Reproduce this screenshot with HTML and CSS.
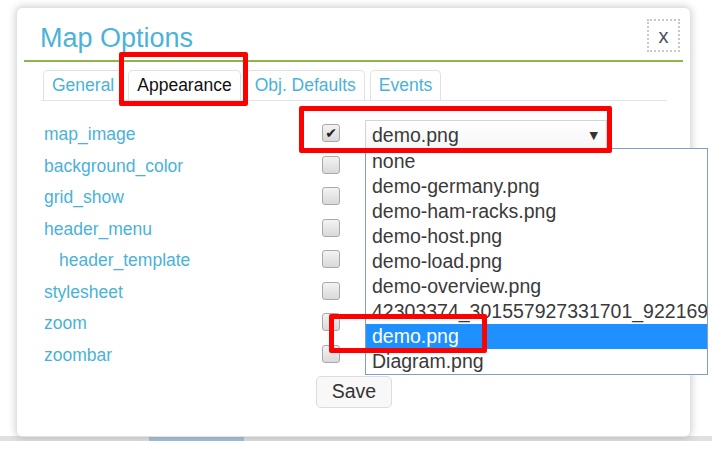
FILE: index.html
```html
<!DOCTYPE html>
<html>
<head>
<meta charset="utf-8">
<link rel="stylesheet" href="styles.css">
</head>
<body>
<div class="page">
  <div class="dialog">
    <div class="dlg-head">
      <h1 class="title">Map Options</h1>
      <button class="close">x</button>
    </div>
    <div class="tabs">
      <span class="tab">General</span>
      <span class="tab active">Appearance</span>
      <span class="tab">Obj. Defaults</span>
      <span class="tab">Events</span>
    </div>
    <div class="props">
      <span class="label">map_image</span>
      <span class="check checked">&#10004;</span>
      <div class="select-wrap">
        <div class="select"><span>demo.png</span><span class="arrow">&#9660;</span></div>
        <ul class="listbox">
          <li>none</li>
          <li>demo-germany.png</li>
          <li>demo-ham-racks.png</li>
          <li>demo-host.png</li>
          <li>demo-load.png</li>
          <li>demo-overview.png</li>
          <li>42303374_301557927331701_922169</li>
          <li class="sel">demo.png</li>
          <li>Diagram.png</li>
        </ul>
      </div>
      <span class="label">background_color</span><span class="check"></span><span></span>
      <span class="label">grid_show</span><span class="check"></span><span></span>
      <span class="label">header_menu</span><span class="check"></span><span></span>
      <span class="label sub">header_template</span><span class="check"></span><span></span>
      <span class="label">stylesheet</span><span class="check"></span><span></span>
      <span class="label">zoom</span><span class="check"></span><span></span>
      <span class="label">zoombar</span><span class="check"></span><span></span>
    </div>
    <div class="actions"><button class="save">Save</button></div>
  </div>
  <div class="mark mark-tab"></div>
  <div class="mark mark-select"></div>
  <div class="mark mark-item"></div>
</div>
<div class="hscroll"><div class="thumb"></div></div>
</body>
</html>
```
FILE: styles.css
```css
* { box-sizing: border-box; }
html, body { margin: 0; padding: 0; background: #fff; }
body { font-family: "Liberation Sans", Arial, sans-serif; }

.page { position: relative; padding: 7px 0 0 16px; height: 437px; }

.dialog {
  width: 675px;
  height: 430px;
  border: 1px solid #e2e2e2;
  border-radius: 6px;
  background: #fff;
  box-shadow: 0 0 9px rgba(0,0,0,0.22);
  display: flex;
  flex-direction: column;
}

.dlg-head {
  height: 54px;
  margin: 0 7px;
  border-bottom: 2px solid #8db54c;
  display: flex;
  justify-content: space-between;
  align-items: flex-start;
}
.title {
  margin: 15px 0 0 16px;
  font-size: 27px;
  line-height: 31px;
  font-weight: normal;
  color: #4db2d8;
}
.close {
  margin: 11px 3px 0 0;
  width: 33px;
  height: 33px;
  padding: 0;
  border: 2px dotted #c8c8c8;
  background: #fff;
  font-family: "Liberation Sans", Arial, sans-serif;
  font-size: 20px;
  line-height: 24px;
  color: #4a4f63;
}

.tabs {
  margin: 8px 23px 0 24px;
  padding-left: 2px;
  height: 31px;
  display: flex;
  gap: 5px;
  border-bottom: 1px solid #e4e4e4;
}
.tab {
  height: 30px;
  padding: 0 8px;
  border: 1px solid #e1e1e1;
  border-bottom: 0;
  border-radius: 5px 5px 0 0;
  font-size: 17.5px;
  line-height: 29px;
  color: #4ab2d9;
}
.tab.active { color: #111; }

.props {
  margin-top: 16.5px;
  padding-left: 27px;
  display: grid;
  grid-template-columns: 278px 43px 1fr;
  grid-auto-rows: 31.5px;
  align-items: center;
}
.label { font-size: 17.5px; line-height: 22px; padding-top: 2px; color: #4ab2d9; }
.label.sub { padding-left: 15px; }

.check {
  width: 18px;
  height: 18px;
  border: 1px solid #a9a9a9;
  border-radius: 3px;
  background: linear-gradient(#f3f3f3, #d9d9d9);
  font-family: "DejaVu Sans", sans-serif;
  font-size: 14px;
  line-height: 16px;
  text-align: center;
  color: #1d1d1d;
}

.select-wrap { position: relative; width: 242px; margin-top: 1px; }
.select {
  height: 28px;
  border: 1px solid #d4d4d4;
  border-bottom: 0;
  background: linear-gradient(#fff, #f6f6f6);
  display: flex;
  justify-content: space-between;
  align-items: center;
  padding: 2px 8px 0 6px;
  font-size: 19.5px;
  color: #3a3a3a;
}
.arrow { font-family: "DejaVu Sans", sans-serif; font-size: 11px; color: #333; }

.listbox {
  position: absolute;
  left: 0;
  top: 28px;
  width: 343px;
  height: 227px;
  margin: 0;
  padding: 0;
  list-style: none;
  border: 1px solid #7f9fc9;
  background: #fff;
  overflow: hidden;
  z-index: 2;
}
.listbox li {
  height: 25px;
  line-height: 25px;
  padding-left: 6px;
  font-size: 19.5px;
  color: #3a3a3a;
  white-space: nowrap;
  overflow: hidden;
}
.listbox li.sel { background: #1e90ff; color: #fff; }

.actions { margin-top: 6px; padding-left: 299px; }
.save {
  width: 76px;
  height: 32px;
  border: 1px solid #dcdcdc;
  border-radius: 5px;
  background: #f8f8f8;
  font-family: "Liberation Sans", Arial, sans-serif;
  font-size: 19.5px;
  color: #333;
}

.mark {
  position: absolute;
  border: 5px solid #ff0000;
  border-radius: 2px;
  z-index: 5;
}
.mark-tab { left: 119px; top: 52px; width: 129px; height: 54px; }
.mark-select { left: 299px; top: 106px; width: 313px; height: 47px; }
.mark-item { left: 329px; top: 314px; width: 158px; height: 39px; }

.hscroll {
  margin-top: -1px;
  height: 5px;
  background: #e0e0e0;
}
.thumb { margin-left: 149px; width: 95px; height: 100%; background: #a8c2d6; }
```
